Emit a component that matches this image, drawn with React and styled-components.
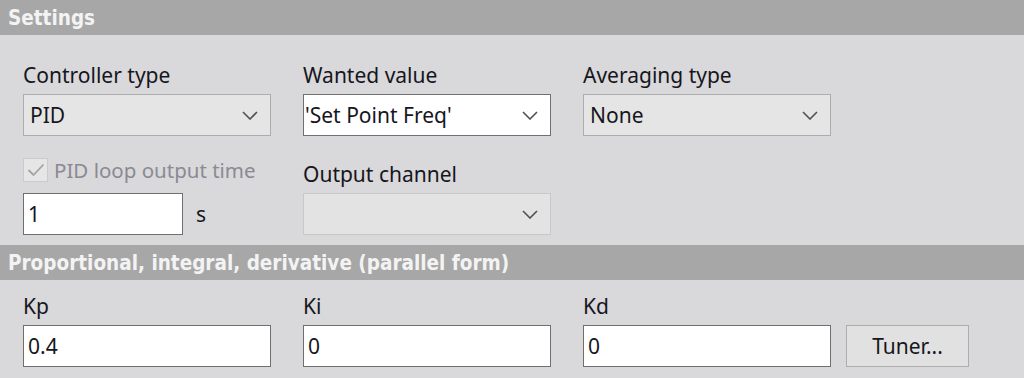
import React from "react";
import styled, { createGlobalStyle } from "styled-components";

const GlobalStyle = createGlobalStyle`
  html, body {
    margin: 0;
    padding: 0;
    background: #d9d8da;
  }
  body {
    font-family: "Noto Sans", "Open Sans", sans-serif;
    color: #161620;
  }
`;

const Page = styled.div`
  width: 1024px;
  height: 378px;
  overflow: hidden;
  background: #d9d8da;
`;

const SectionHeader = styled.div`
  box-sizing: border-box;
  height: 35px;
  padding: 2px 0 0 8px;
  line-height: 33px;
  background: #a7a7a7;
  color: #f3f3f3;
  font-family: "DejaVu Sans Condensed", "DejaVu Sans", sans-serif;
  font-weight: bold;
  font-size: 20.5px;
  white-space: nowrap;
`;

const SectionBody = styled.div`
  padding: ${(p) => p.$top}px 0 ${(p) => p.$bottom}px 23px;
`;

const FieldGrid = styled.div`
  display: grid;
  grid-template-columns: repeat(${(p) => p.$cols || 3}, 248px) auto;
  column-gap: 32px;
  align-items: end;
  margin-top: ${(p) => p.$gap || 0}px;
`;

const Field = styled.div`
  display: flex;
  flex-direction: column;
`;

const Label = styled.div`
  font-size: 21px;
  line-height: 24px;
  margin-bottom: 7px;
  white-space: nowrap;
`;

const Box = styled.div`
  box-sizing: border-box;
  height: 42px;
  width: ${(p) => p.$width || 248}px;
  display: flex;
  align-items: center;
  font-size: 21px;
  white-space: nowrap;
`;

const Combo = styled(Box)`
  padding: 0 12px 0 ${(p) => (p.$editable ? 1 : 6)}px;
  justify-content: space-between;
  background: ${(p) => (p.$editable ? "#ffffff" : p.$disabled ? "#e3e3e3" : "#e5e5e5")};
  border: 1px solid ${(p) => (p.$editable ? "#707070" : p.$disabled ? "#c8c8c8" : "#adadad")};
`;

const TextBox = styled(Box)`
  padding-left: 4px;
  background: #ffffff;
  border: 1px solid #6f6f6f;
`;

const Chevron = () => (
  <svg width="16" height="9" viewBox="0 0 16 9">
    <path d="M1 1 L8 8 L15 1" fill="none" stroke="#505050" strokeWidth="1.6" />
  </svg>
);

const Select = ({ value, editable, disabled }) => (
  <Combo $editable={editable} $disabled={disabled}>
    <span>{value}</span>
    <Chevron />
  </Combo>
);

const CheckRow = styled.div`
  display: flex;
  align-items: center;
  gap: 6px;
  height: 24px;
  margin-bottom: 11px;
  color: #8a8a93;
  font-size: 20.5px;
  white-space: nowrap;
`;

const CheckBox = styled.div`
  box-sizing: border-box;
  width: 25px;
  height: 24px;
  background: #e6e6e6;
  border: 1px solid #cbcbcb;
  display: flex;
  align-items: center;
  justify-content: center;
`;

const InputRow = styled.div`
  display: flex;
  align-items: center;
  gap: 13px;
  font-size: 21px;
`;

const Button = styled.button`
  box-sizing: border-box;
  height: 42px;
  width: 123px;
  margin-left: -17px;
  background: #e1e1e1;
  border: 1px solid #adadad;
  font-family: inherit;
  font-size: 21px;
  color: #161620;
  padding: 0;
`;

function App() {
  return (
    <Page>
      <GlobalStyle />
      <SectionHeader>Settings</SectionHeader>
      <SectionBody $top={28} $bottom={10}>
        <FieldGrid>
          <Field>
            <Label>Controller type</Label>
            <Select value="PID" />
          </Field>
          <Field>
            <Label>Wanted value</Label>
            <Select value="'Set Point Freq'" editable />
          </Field>
          <Field>
            <Label>Averaging type</Label>
            <Select value="None" />
          </Field>
        </FieldGrid>
        <FieldGrid $gap={22}>
          <Field>
            <CheckRow>
              <CheckBox>
                <svg width="18" height="14" viewBox="0 0 18 14">
                  <path d="M1.5 7 L6.5 12 L16.5 1.5" fill="none" stroke="#a3a3a3" strokeWidth="1.8" />
                </svg>
              </CheckBox>
              PID loop output time
            </CheckRow>
            <InputRow>
              <TextBox $width={160}>1</TextBox>
              <span>s</span>
            </InputRow>
          </Field>
          <Field>
            <Label>Output channel</Label>
            <Select value="" disabled />
          </Field>
        </FieldGrid>
      </SectionBody>
      <SectionHeader>Proportional, integral, derivative (parallel form)</SectionHeader>
      <SectionBody $top={14} $bottom={0}>
        <FieldGrid>
          <Field>
            <Label>Kp</Label>
            <TextBox>0.4</TextBox>
          </Field>
          <Field>
            <Label>Ki</Label>
            <TextBox>0</TextBox>
          </Field>
          <Field>
            <Label>Kd</Label>
            <TextBox>0</TextBox>
          </Field>
          <Button>Tuner...</Button>
        </FieldGrid>
      </SectionBody>
    </Page>
  );
}

export default App;
